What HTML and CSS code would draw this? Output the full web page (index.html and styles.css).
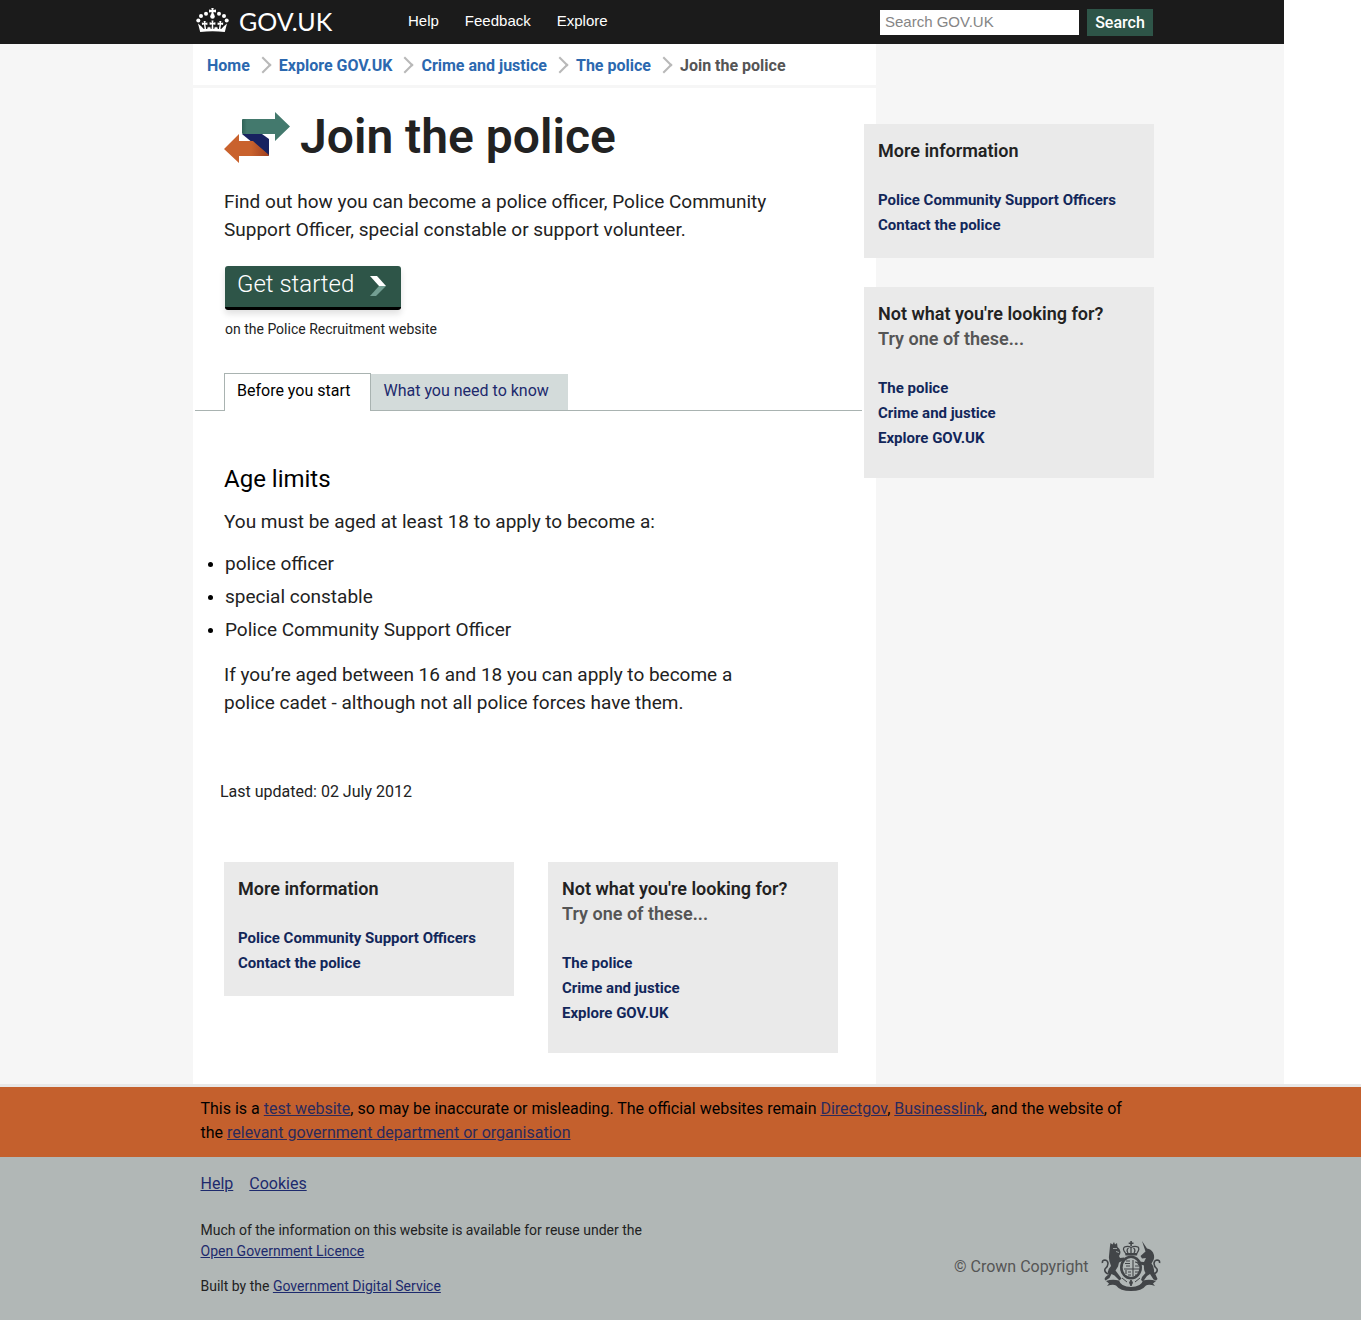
FILE: index.html
```html
<!DOCTYPE html>
<html lang="en">
<head>
<meta charset="utf-8">
<meta name="viewport" content="width=device-width, initial-scale=1">
<title>Join the police - GOV.UK</title>
<link rel="stylesheet" href="styles.css">
</head>
<body>
<header class="site-header">
  <div class="container header-inner">
    <a class="logo" href="#">
      <svg class="crown" viewBox="0 0 33 25" aria-hidden="true">
        <g fill="#fff">
          <circle cx="2.300" cy="12.500" r="2"/><circle cx="5" cy="8" r="2"/><circle cx="10" cy="5.800" r="2"/>
          <circle cx="30.700" cy="12.500" r="2"/><circle cx="28" cy="8" r="2"/><circle cx="23" cy="5.800" r="2"/>
          <path d="M15.300 0h2.400l-.4 2.100 2.700-.5v2.800l-2.600-.4.500 3h-2.800l.5-3-2.600.4V1.600l2.700.5z"/>
          <circle cx="16.500" cy="8.400" r="2.300"/>
          <path d="M4.200 24 2 15.500l3.200 2.800 2.600 2.700h17.400l2.600-2.700 3.200-2.800L28.800 24q-12.300-1.600-24.600 0z"/>
          <path d="M15.500 12.500h2l-.4 2.200 2.300-.5v2.600l-2.300-.4.400 5h-2l.4-5-2.300.4v-2.600l2.300.5z"/>
          <path d="M7.700 13h2l-.3 2 2-.4v2.400l-2-.4.800 5H8.600l-.6-5-2 .4-.2-2.400 2.100.4zM23.300 13h2l-.2 2 2.100-.4-.2 2.400-2-.4-.6 5h-1.600l.8-5-2 .4v-2.400l2 .4z"/>
          <path d="m11 21.500 1-3 1 1.200 1-1.200 1 3zm7 0 1-3 1 1.200 1-1.200 1 3z"/>
        </g>
      </svg>
      <span>GOV.UK</span>
    </a>
    <nav class="site-nav" aria-label="Site">
      <a href="#">Help</a>
      <a href="#">Feedback</a>
      <a href="#">Explore</a>
    </nav>
    <form class="search" role="search">
      <input type="search" aria-label="Search GOV.UK" placeholder="Search GOV.UK">
      <button type="submit">Search</button>
    </form>
  </div>
</header>

<div class="page">
  <div class="container columns">
    <main class="content">
      <nav aria-label="Breadcrumb">
        <ol class="breadcrumb">
          <li><a href="#">Home</a></li>
          <li><a href="#">Explore GOV.UK</a></li>
          <li><a href="#">Crime and justice</a></li>
          <li><a href="#">The police</a></li>
          <li>Join the police</li>
        </ol>
      </nav>
      <div class="title">
        <svg class="arrows" viewBox="0 0 66 52" aria-hidden="true">
          <defs>
            <linearGradient id="green"><stop offset="0" stop-color="#2f6257"/><stop offset=".1" stop-color="#43796d"/></linearGradient>
            <linearGradient id="orange"><stop offset=".6" stop-color="#c9622d"/><stop offset="1" stop-color="#9f3f20"/></linearGradient>
          </defs>
          <path fill="#182260" d="M18 22h20l7 5v17z"/>
          <path fill="url(#green)" d="M19 7h32V0l15 14.500L51 29v-7H19q-1 0-1-1V8q0-1 1-1z"/>
          <path fill="url(#orange)" d="M0 37 15 22v7h14l16 14q0 1-1 1H15v7z"/>
        </svg>
        <h1>Join the police</h1>
      </div>

      <div class="intro">
        <p>Find out how you can become a police officer, Police Community<br>Support Officer, special constable or support volunteer.</p>
        <button class="start" type="button">Get started
          <svg viewBox="0 0 16 20" aria-hidden="true"><path fill="#fff" d="M0 0h7l9 10H9z"/><path fill="#739f93" d="M9 10h7L6 20H0z"/></svg>
        </button>
        <p class="destination">on the Police Recruitment website</p>
      </div>

      <nav class="tabs" aria-label="Sections">
        <a class="tab current" href="#start" aria-current="true">Before you start</a>
        <a class="tab" href="#know">What you need to know</a>
      </nav>

      <section class="guide" id="start">
        <h2>Age limits</h2>
        <p>You must be aged at least 18 to apply to become a:</p>
        <ul>
          <li>police officer</li>
          <li>special constable</li>
          <li>Police Community Support Officer</li>
        </ul>
        <p>If you’re aged between 16 and 18 you can apply to become a<br>police cadet - although not all police forces have them.</p>
      </section>

      <p class="updated">Last updated: 02 July 2012</p>

      <div class="related-row">
        <section class="related">
          <h2>More information</h2>
          <ul>
            <li><a href="#">Police Community Support Officers</a></li>
            <li><a href="#">Contact the police</a></li>
          </ul>
        </section>
        <section class="related more">
          <h2>Not what you're looking for? <span>Try one of these...</span></h2>
          <ul>
            <li><a href="#">The police</a></li>
            <li><a href="#">Crime and justice</a></li>
            <li><a href="#">Explore GOV.UK</a></li>
          </ul>
        </section>
      </div>
    </main>

    <aside class="sidebar">
      <section class="related">
        <h2>More information</h2>
        <ul>
          <li><a href="#">Police Community Support Officers</a></li>
          <li><a href="#">Contact the police</a></li>
        </ul>
      </section>
      <section class="related more">
        <h2>Not what you're looking for? <span>Try one of these...</span></h2>
        <ul>
          <li><a href="#">The police</a></li>
          <li><a href="#">Crime and justice</a></li>
          <li><a href="#">Explore GOV.UK</a></li>
        </ul>
      </section>
    </aside>
  </div>
</div>

<footer class="site-footer">
  <div class="notice">
    <p class="footer-inner">This is a <a href="#">test website</a>, so may be inaccurate or misleading. The official websites remain <a href="#">Directgov</a>, <a href="#">Businesslink</a>, and the website of<br>the <a href="#">relevant government department or organisation</a></p>
  </div>
  <div class="footer-inner footer-main">
    <div class="footer-text">
      <nav class="footer-links" aria-label="Support">
        <a href="#">Help</a>
        <a href="#">Cookies</a>
      </nav>
      <p>Much of the information on this website is available for reuse under the<br><a href="#">Open Government Licence</a></p>
      <p>Built by the <a href="#">Government Digital Service</a></p>
    </div>
    <div class="copyright">
      <span>© Crown Copyright</span>
      <svg class="arms" viewBox="0 0 60 50" aria-hidden="true">
        <g fill="#424548">
          <path d="M29.300 0h1.600v1.500h1.600V3h-1.600v2h-1.600V3h-1.600V1.500h1.600z"/>
          <path d="M24 12h12.500l-.5 2.500H24.500z"/>
        </g>
        <path d="M24.500 12Q21 8 23.500 6q3.500-1.500 6.500.500 3.500-2 7-.5 2 2-1 6M30 6v6m-3 0q-2-3 .5-5m5.500 5q2-3-.5-5" fill="none" stroke="#424548" stroke-width="1.300"/>
        <ellipse cx="30" cy="26.500" rx="11" ry="12" fill="#424548"/>
        <ellipse cx="30" cy="26.500" rx="8.300" ry="9.500" fill="#b1b7b6"/>
        <path d="M25 20h4m-5 2.500h5m-4 2.500h4m-6 3h15m-11 3h3m-3 3h3m2-15v16m2-14q3 0 4 3m-4 1h4m-4 6h4m-4 3h3m-12-5v4m14-5v3" fill="none" stroke="#424548" stroke-width="1.100"/>
        <path d="m9 5 .5-3 2 1.500L13 1l1 2.500L16 2l.5 4q3 2 3 5 0 2-1.500 4l1 2 4-.5v2.500l-5 2.500-1 4-2.500 4 3 4 3 4-2 2-5-5-3-1.500-2 4-4 2.500-1-1.500 1-2 3-2.500q-2-4 2.500-8.500Q7.500 19 8 15z" fill="#424548"/>
        <path d="M7 33q-4-2-3-5 3-2.500 3-5.500 0-3-3-3.500-3 0-2.500 3" fill="none" stroke="#424548" stroke-width="1.600"/>
        <path d="M12 7.500h4m-1 3 3 1" stroke="#b1b7b6" fill="none" stroke-width=".8"/>
        <path d="m41 0 5 7.500q4 .5 6 4 2 4 .5 7.500l-2 3.500q3 3 2.500 8l2 4 1.500 3.500-1.500 1.500-2.500-1-3.500-5.500-3 2-4 5.500-2-1.500 1-3 3.500-4q-2-3-1.500-7.500l-5-1.500-1-2.500 6 .5 2-4-4 .5-1.500-2.500 5-4.500z" fill="#424548"/>
        <path d="M53 33q4-2 3-5-3-2.500-3-5.500 0-3 3-3.500 3 0 2.500 3" fill="none" stroke="#424548" stroke-width="1.600"/>
        <path d="M5 40q6-2 13-.5Q20 46 30 46t12-6.500q7-1.500 13 .5l-3 2.500 2 2.500q-6-2-9-.5Q41 50 30 50t-15-5.500q-3-1.500-9 .5l2-2.500z" fill="#424548"/>
        <path d="m30 39 1.500 2.500L30 45l-1.500-3.500zM21 37l5 4m13-4-5 4" fill="#424548" stroke="#424548"/>
      </svg>
    </div>
  </div>
</footer>
</body>
</html>
```

FILE: styles.css
```css
* { box-sizing: border-box; }

body {
  margin: 0 8px 8px 0;
  background: #fff;
  color: #222;
  font-family: Roboto, "Liberation Sans", sans-serif;
  font-size: 19px;
  line-height: 28px;
}

h1, h2, p, ul, ol { margin: 0; padding: 0; }
ul, ol { list-style: none; }
button, input { border: 0; border-radius: 0; font: inherit; }

.site-header, .page { margin-right: 77px; }
.site-header { background: #1b1b1b; }
.page { background: #f6f6f6; }

.container {
  max-width: 961px;
  margin-left: max(0px, calc((100% - 898px) / 2));
}

/* Header */
.header-inner {
  display: flex;
  align-items: center;
  min-height: 44px;
  padding-right: 1px;
}
.logo {
  display: flex;
  align-items: center;
  gap: 10px;
  width: 212px;
  padding: 0 0 2px 3px;
  color: #fff;
  font-family: Lato, sans-serif;
  font-size: 25px;
  text-decoration: none;
}
.crown { width: 33px; height: 25px; margin-bottom: 2px; }
.site-nav {
  display: flex;
  gap: 26px;
  margin-left: 3px;
  padding-bottom: 2px;
  font-family: "Liberation Sans", Arial, sans-serif;
  font-size: 15px;
}
.site-nav a { color: #fff; text-decoration: none; }
.search {
  display: flex;
  align-items: center;
  gap: 8px;
  margin-left: auto;
}
.search input {
  width: 199px;
  height: 25px;
  padding: 0 5px;
  background: #fff;
  font-family: "Liberation Sans", Arial, sans-serif;
  font-size: 15px;
}
.search input::placeholder { color: #858585; }
.search button {
  width: 66px;
  height: 27px;
  padding: 0 0 2px;
  background: #2e5548;
  color: #fff;
  font-size: 16px;
  font-weight: 500;
}

/* Columns */
.columns { display: flex; align-items: flex-start; }
.content {
  flex: 0 1 683px;
  padding-bottom: 31px;
  background: #fff;
}
.sidebar {
  flex: 0 0 290px;
  margin: 80px 0 0 -12px;
}

/* Breadcrumb */
.breadcrumb {
  display: flex;
  padding: 10px 14px 7px;
  border-bottom: 3px solid #f6f6f6;
  color: #555;
  font-size: 16px;
  font-weight: 700;
  line-height: 24px;
}
.breadcrumb li { display: flex; align-items: center; }
.breadcrumb li + li::before {
  content: "";
  width: 10px;
  height: 10px;
  margin: 0 10px 3px 7px;
  border: solid #b8b8b8;
  border-width: 2px 2px 0 0;
  transform: rotate(45deg);
}
.breadcrumb a { color: #2b68af; text-decoration: none; }

/* Title and introduction */
.title {
  display: flex;
  gap: 10px;
  padding: 20px 31px 0;
}
.arrows { width: 66px; height: 52px; margin-top: 4px; }
.title h1 { font-size: 48px; font-weight: 600; line-height: 58px; }
.intro { padding: 22px 31px 0; }
.start {
  display: flex;
  align-items: center;
  gap: 16px;
  height: 44px;
  margin: 22px 0 7px 1px;
  padding: 0 15px 6px 12px;
  border-bottom: 3px solid #000;
  border-radius: 3px;
  background: #2e5548;
  box-shadow: 0 4px 6px rgba(0, 0, 0, .12);
  color: #fff;
  font-size: 24px;
  font-weight: 300;
}
.start svg { width: 16px; height: 20px; margin-top: 5px; }
.destination { padding-left: 1px; font-size: 14px; line-height: 24px; }

/* Tabs */
.tabs {
  display: flex;
  margin: 32px 14px 0 2px;
  padding-left: 29px;
  border-bottom: 1px solid #a9b3b1;
  font-size: 16px;
}
.tab {
  margin-top: 1px;
  padding: 3px 19px 5px 12px;
  background: #d3dbda;
  color: #1d2a6d;
  text-decoration: none;
}
.tab.current {
  margin: 0 0 -1px;
  padding-right: 20px;
  border: 1px solid #a9b3b1;
  border-bottom: 0;
  background: #fff;
  color: #000;
}

/* Guide body */
.guide { padding: 54px 31px 0; }
.guide h2 { margin-bottom: 15px; color: #000; font-size: 24px; font-weight: 400; }
.guide ul { margin: 14px 0 17px; padding-left: 1px; list-style: disc; }
.guide li { line-height: 28px; }
.guide li + li { margin-top: 5px; }
.guide li::marker { color: #000; font-size: 16px; }
.updated { padding: 61px 27px 0; font-size: 16px; }

/* Related boxes */
.related {
  padding: 14px 14px 20px;
  background: #eaeaea;
  font-size: 15px;
  font-weight: 700;
  line-height: 25px;
}
.related h2 { margin-bottom: 25px; font-size: 18px; font-weight: 600; line-height: 25px; }
.related span { display: block; color: #555; }
.related a { color: #12275a; text-decoration: none; }
.related.more { padding-bottom: 27px; }
.sidebar .related + .related { margin-top: 29px; }
.related-row {
  display: grid;
  grid-template-columns: 290px 290px;
  align-items: start;
  gap: 34px;
  padding: 56px 31px 0;
}

/* Footer */
.site-footer {
  border-top: 3px solid #e8e8e8;
  background: #b1b7b6;
}
.footer-inner { max-width: 960px; margin: 0 auto; }
.site-footer a { color: #1d2a6d; }
.notice {
  padding: 10px 0 12px;
  background: #c4602d;
  color: #000;
  font-size: 16px;
  line-height: 24px;
}
.site-footer .notice a { color: #2b2a5c; }
.footer-main {
  display: flex;
  align-items: flex-end;
  justify-content: space-between;
  padding: 15px 0 23px;
  font-size: 14px;
  line-height: 21px;
}
.footer-links {
  display: flex;
  gap: 16px;
  margin-bottom: 24px;
  font-size: 16px;
  line-height: 24px;
}
.footer-text p + p { margin-top: 14px; }
.copyright {
  display: flex;
  align-items: center;
  gap: 12px;
  padding-bottom: 6px;
  color: #555;
  font-size: 16px;
}
.arms { width: 60px; height: 50px; }
```
